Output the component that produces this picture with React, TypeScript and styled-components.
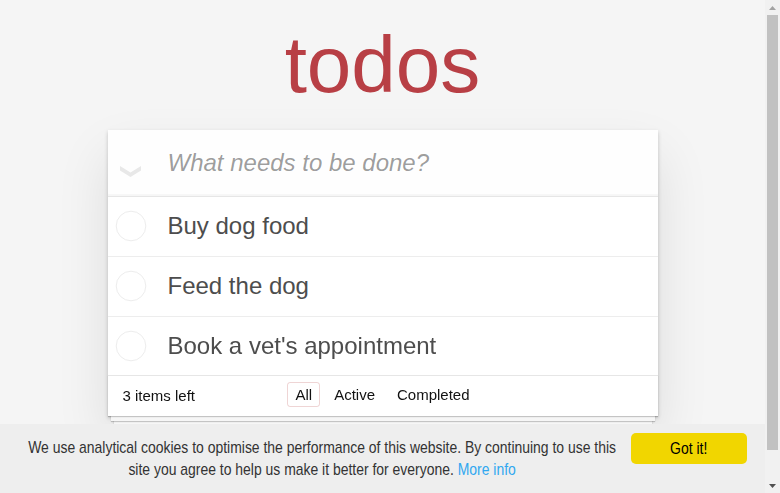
import React from 'react';
import styled, { createGlobalStyle } from 'styled-components';

const Global = createGlobalStyle`
  html, body { margin: 0; padding: 0; overflow: hidden; }
  body {
    background: #f5f5f5;
    color: #4d4d4d;
    font: 14px 'Liberation Sans', Arial, sans-serif;
    line-height: 1.4em;
    -webkit-font-smoothing: antialiased;
  }
  * { box-sizing: border-box; }
`;

const Frame = styled.div`
  display: flex;
  height: 493px;
  overflow: hidden;
`;

const Viewport = styled.div`
  flex: 1;
  min-width: 0;
  display: flex;
  flex-direction: column;
  align-items: center;
`;

const Scrollbar = styled.div`
  flex: none;
  width: 15px;
  height: 493px;
  display: flex;
  flex-direction: column;
  background: #f1f1f1;
`;

const ArrowBox = styled.div`
  flex: none;
  height: 15px;
  display: flex;
  align-items: center;
  justify-content: center;
`;

const Track = styled.div`
  flex: 1;
  padding: 0 2px;
`;

const Thumb = styled.div`
  height: 435px;
  background: #c1c1c1;
`;

const Title = styled.h1`
  margin: 0;
  width: 550px;
  height: 130px;
  padding-top: 25px;
  font-size: 80px;
  line-height: 80px;
  font-weight: 200;
  color: #b83f45;
  text-align: center;
`;

const TodoApp = styled.section`
  width: 550px;
  background: #fff;
  box-shadow: 0 2px 4px 0 rgba(0, 0, 0, 0.2), 0 25px 50px 0 rgba(0, 0, 0, 0.1);
`;

const Header = styled.header`
  display: flex;
  height: 66px;
  background: rgba(0, 0, 0, 0.003);
  box-shadow: inset 0 -2px 1px rgba(0, 0, 0, 0.03);
`;

const ToggleAll = styled.div`
  width: 60px;
  flex: none;
  padding: 33px 0 0 12px;
`;

const NewTodo = styled.input`
  flex: 1;
  min-width: 0;
  height: 66px;
  padding: 16px 16px 17px 0;
  border: none;
  outline: none;
  background: transparent;
  font-family: 'Liberation Sans', Arial, sans-serif;
  font-size: 24px;
  line-height: 1.4em;
  color: #4d4d4d;
  caret-color: #111;
  &::placeholder {
    font-style: italic;
    color: rgba(0, 0, 0, 0.4);
  }
`;

const Main = styled.ul`
  list-style: none;
  margin: 0;
  padding: 0;
  border-top: 1px solid #e6e6e6;
`;

const Item = styled.li`
  display: flex;
  align-items: center;
  font-size: 24px;
  border-bottom: 1px solid #ededed;
  &:last-child {
    border-bottom: none;
  }
`;

const Check = styled.svg`
  flex: none;
  width: 40px;
  height: 40px;
  margin-right: 20px;
`;

const Label = styled.label`
  padding: 15px 15px 15px 0;
  line-height: 1.2;
  color: #4d4d4d;
  word-break: break-all;
`;

const Footer = styled.footer`
  display: grid;
  grid-template-columns: 1fr auto 1fr;
  align-items: center;
  height: 41px;
  padding: 10px 15px;
  border-top: 1px solid #e6e6e6;
  color: #111;
  font-size: 15px;
  line-height: 20px;
  box-shadow: 0 1px 1px rgba(0, 0, 0, 0.2), 0 8px 0 -3px #f6f6f6,
    0 9px 1px -3px rgba(0, 0, 0, 0.2), 0 16px 0 -6px #f6f6f6,
    0 17px 2px -6px rgba(0, 0, 0, 0.2);
`;

const Count = styled.span`
  text-align: left;
`;

const Filters = styled.ul`
  list-style: none;
  margin: -4px 0 -1px;
  padding: 0;
  display: flex;
`;

const FilterLink = styled.a<{ $selected?: boolean }>`
  display: block;
  margin: 0 3px;
  padding: 3px 7px;
  line-height: 17px;
  color: inherit;
  text-decoration: none;
  border: 1px solid ${(p) => (p.$selected ? 'rgba(175, 47, 47, 0.2)' : 'transparent')};
  border-radius: 3px;
`;

const Banner = styled.div`
  position: fixed;
  left: 0;
  right: 15px;
  bottom: 0;
  height: 69px;
  display: flex;
  align-items: flex-start;
  padding: 9px 18px 11px 22px;
  background: #eee;
  color: #333;
  font-family: 'Liberation Sans', Arial, sans-serif;
  font-size: 17px;
`;

const Message = styled.div`
  flex: 1;
  min-width: 0;
  padding-top: 4px;
`;

/* Arial Narrow is not installed: condense Liberation Sans horizontally */
const Narrow = styled.p`
  width: 732px;
  margin: 0;
  text-align: center;
  line-height: 22px;
  transform: scaleX(0.82);
  transform-origin: left top;
`;

const MoreInfo = styled.a`
  color: #31a8f0;
  text-decoration: none;
`;

const GotIt = styled.button`
  flex: none;
  width: 116px;
  height: 31px;
  margin-left: 9px;
  border: none;
  border-radius: 5px;
  background: #f1d600;
  color: #000;
  font-family: 'Liberation Sans', Arial, sans-serif;
  font-size: 17px;
  padding: 0;
`;

const NarrowLabel = styled.span`
  display: inline-block;
  transform: scaleX(0.82);
`;

const todos = ['Buy dog food', 'Feed the dog', "Book a vet's appointment"];

export default function App() {
  return (
    <>
      <Global />
      <Frame>
        <Viewport>
          <Title>todos</Title>
          <TodoApp>
            <Header>
              <ToggleAll>
                <svg width="21" height="11" viewBox="0 0 21 11">
                  <path d="M0 0 L10.5 6.5 L21 0 L21 4.5 L10.5 11 L0 4.5 Z" fill="#e8e8e8" />
                </svg>
              </ToggleAll>
              <NewTodo placeholder="What needs to be done?" autoFocus />
            </Header>
            <Main>
              {todos.map((t) => (
                <Item key={t}>
                  <Check viewBox="0 0 40 40">
                    <circle cx="23" cy="20" r="14.8" fill="none" stroke="#ededed" strokeWidth="1" />
                  </Check>
                  <Label>{t}</Label>
                </Item>
              ))}
            </Main>
            <Footer>
              <Count>3 items left</Count>
              <Filters>
                <li><FilterLink href="#/" $selected>All</FilterLink></li>
                <li><FilterLink href="#/active">Active</FilterLink></li>
                <li><FilterLink href="#/completed">Completed</FilterLink></li>
              </Filters>
              <span />
            </Footer>
          </TodoApp>
        </Viewport>
        <Scrollbar>
          <ArrowBox>
            <svg width="7" height="4" viewBox="0 0 7 4">
              <path d="M0 4 L3.5 0 L7 4 Z" fill="#a3a3a3" />
            </svg>
          </ArrowBox>
          <Track>
            <Thumb />
          </Track>
          <ArrowBox>
            <svg width="7" height="4" viewBox="0 0 7 4">
              <path d="M0 0 L3.5 4 L7 0 Z" fill="#505050" />
            </svg>
          </ArrowBox>
        </Scrollbar>
      </Frame>
      <Banner>
        <Message>
          <Narrow>
            We use analytical cookies to optimise the performance of this website. By continuing to use this site you agree to help us make it better for everyone.{' '}
            <MoreInfo href="#">More info</MoreInfo>
          </Narrow>
        </Message>
        <GotIt>
          <NarrowLabel>Got it!</NarrowLabel>
        </GotIt>
      </Banner>
    </>
  );
}
